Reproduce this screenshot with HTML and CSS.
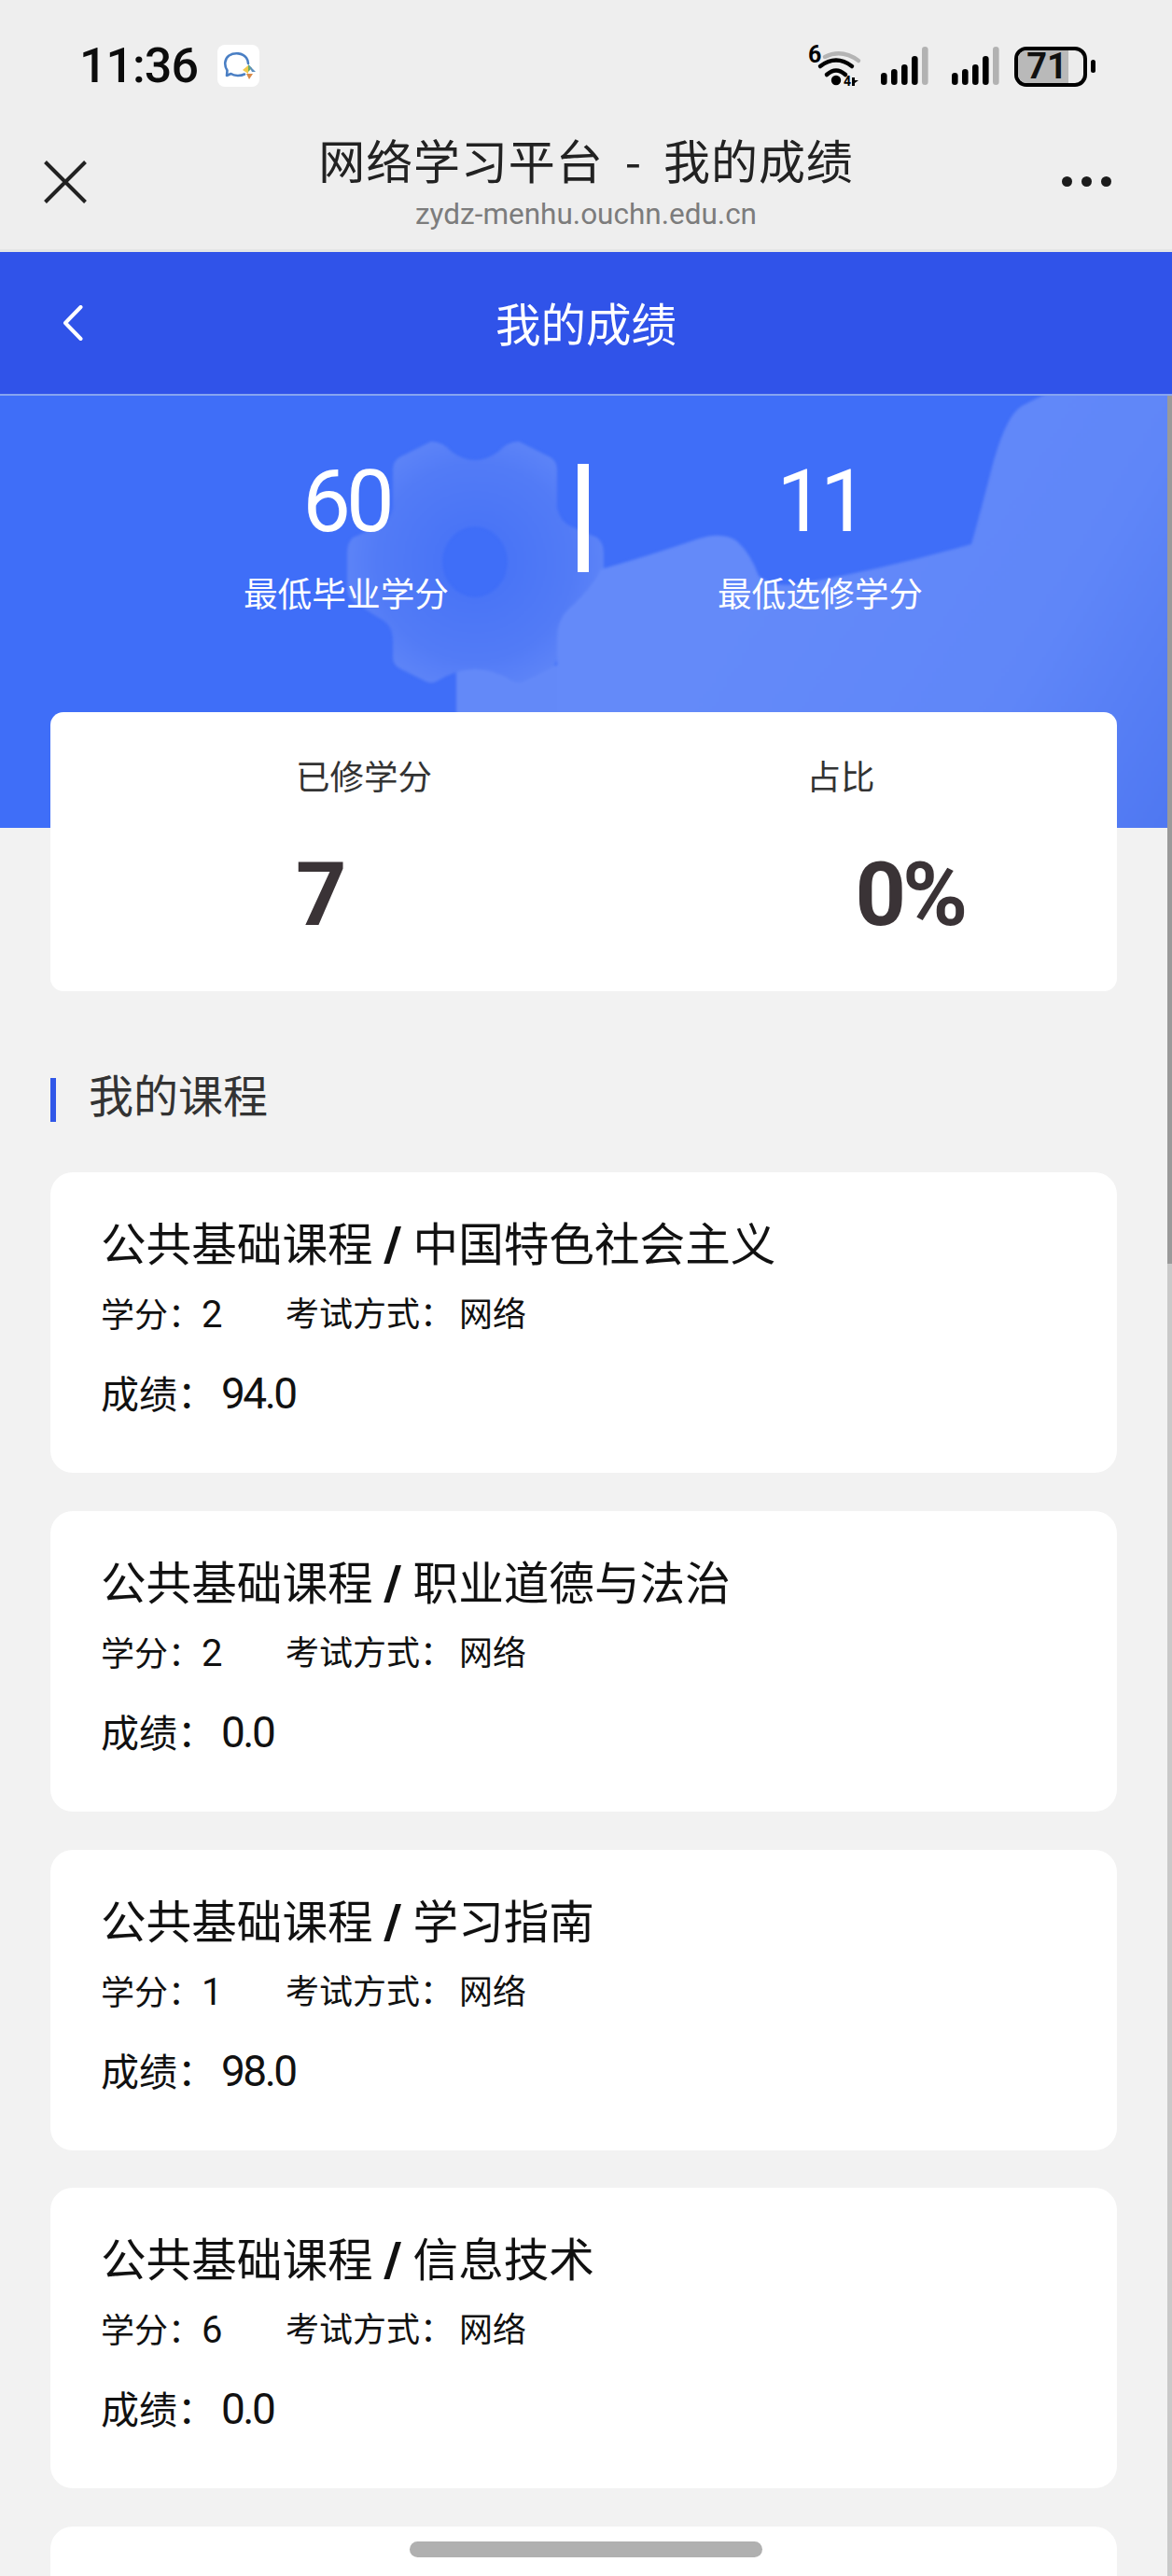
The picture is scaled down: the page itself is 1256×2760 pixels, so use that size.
FILE: index.html
```html
<!DOCTYPE html>
<html lang="zh-CN">
<head>
<meta charset="utf-8">
<title>我的成绩</title>
<link rel="stylesheet" href="styles.css">
</head>
<body>
<div class="screen">
  <header class="chrome">
    <div class="status">
      <div class="status-left">
        <span class="time">11:36</span>
        <svg class="app-icon" viewBox="0 0 45 45" aria-hidden="true">
          <rect width="45" height="45" rx="8" fill="#fff"/>
          <path d="M29 31.5 C25 33.5 18 33.5 14.5 31 L10 33 L10.5 27.5 C7 22 7.5 15 12.5 11.5 C18 8 27 8.5 31 14 C32.5 16 33 18 33 20" fill="none" stroke="#4a7fc4" stroke-width="2.6" stroke-linecap="round" stroke-linejoin="round"/>
          <path d="M33 21 L37 25 L33 29 Z" fill="#6fae62"/>
          <path d="M33 21 L37 25 L41 29 L37 29 Z" fill="#5d8fc0"/>
          <path d="M27 27 L33 22 L33 31 Z" fill="#f1c94c"/>
          <path d="M31 31 L38 31 L34 37 Z" fill="#d98a4a"/>
        </svg>
      </div>
      <div class="status-right">
        <svg class="wifi" viewBox="0 0 58 46" aria-hidden="true">
          <text class="wifi-six" x="0" y="19">6</text>
          <path d="M18 13 Q36 4 54 17" fill="none" stroke="#b4b4b4" stroke-width="4.5" stroke-linecap="round"/>
          <path d="M13 23 Q30 10 47 23" fill="none" stroke="#000" stroke-width="4.5" stroke-linecap="round"/>
          <path d="M20 32 Q30 23 40 32" fill="none" stroke="#000" stroke-width="4.5" stroke-linecap="round"/>
          <circle cx="30" cy="38" r="5.2" fill="#000"/>
          <text class="wifi-four" x="38" y="44">4</text>
          <path d="M47 35 L47 44 L50 44 L50 41 L54 38 L50 38 L50 35 Z" fill="#000"/>
        </svg>
        <svg class="signal" viewBox="0 0 51 41" aria-hidden="true">
          <rect x="0" y="28" width="6.6" height="13" rx="3.3"/>
          <rect x="11" y="24" width="6.6" height="17" rx="3.3"/>
          <rect x="22" y="19" width="6.6" height="22" rx="3.3"/>
          <rect x="33" y="10" width="6.6" height="31" rx="3.3"/>
          <rect class="bar-off" x="44" y="0" width="6.6" height="41" rx="3.3"/>
        </svg>
        <svg class="signal signal-b" viewBox="0 0 51 41" aria-hidden="true">
          <rect x="0" y="28" width="6.6" height="13" rx="3.3"/>
          <rect x="11" y="24" width="6.6" height="17" rx="3.3"/>
          <rect x="22" y="19" width="6.6" height="22" rx="3.3"/>
          <rect x="33" y="10" width="6.6" height="31" rx="3.3"/>
          <rect class="bar-off" x="44" y="0" width="6.6" height="41" rx="3.3"/>
        </svg>
        <div class="battery">
          <div class="battery-body"><div class="battery-fill"></div><span class="battery-num">71</span></div>
          <div class="battery-nub"></div>
        </div>
      </div>
    </div>
    <div class="browser-bar">
      <svg class="close" viewBox="0 0 46 46" aria-hidden="true">
        <path d="M1.5 1.5 L44.5 44.5 M44.5 1.5 L1.5 44.5" stroke="#222" stroke-width="4" fill="none"/>
      </svg>
      <div class="browser-title">
        <div class="page-title">网络学习平台 - 我的成绩</div>
        <div class="page-url">zydz-menhu.ouchn.edu.cn</div>
      </div>
      <div class="more"><i></i><i></i><i></i></div>
    </div>
  </header>

  <nav class="navbar">
    <svg class="back" viewBox="0 0 22 38" aria-hidden="true">
      <path d="M19.5 2 L3 19 L19.5 36" fill="none" stroke="#fff" stroke-width="4" stroke-linecap="round" stroke-linejoin="round"/>
    </svg>
    <h1 class="nav-title">我的成绩</h1>
  </nav>

  <section class="hero">
    <svg class="hero-art" viewBox="0 0 1256 463" aria-hidden="true">
      <defs>
        <radialGradient id="gearFill" gradientUnits="userSpaceOnUse" cx="509" cy="178" r="140">
          <stop offset="0.3" stop-color="#4a75f6"/>
          <stop offset="0.75" stop-color="#527bf6"/>
          <stop offset="1" stop-color="#5d84f7"/>
        </radialGradient>
        <linearGradient id="hillFill" gradientUnits="userSpaceOnUse" x1="780" y1="180" x2="1256" y2="463">
          <stop offset="0" stop-color="#648af9"/>
          <stop offset="0.6" stop-color="#5f86f8"/>
          <stop offset="1" stop-color="#4e77f1"/>
        </linearGradient>
      </defs>
      <path d="M489 470 L489 289 L620 289 L620 470 Z" fill="#6389f8"/>
      <path fill="url(#gearFill)" fill-rule="evenodd" d="M462 49 Q474 49 484 60 Q509 78 534 60 Q544 49 556 49 L590 66 Q597 70 597 80 L597 120 Q600 135 612 140 L640 152 Q647 158 647 168 L647 205 Q647 215 640 220 L612 238 Q597 245 597 262 L597 280 Q597 288 590 292 L562 306 Q556 309 550 306 Q509 280 468 306 Q462 309 456 306 L428 292 Q421 288 421 280 L421 262 Q421 245 406 238 L378 220 Q372 215 372 205 L372 168 Q372 158 378 152 L406 140 Q418 135 421 120 L421 80 Q421 70 428 66 L462 49 Z M474 178 a35 38 0 1 0 70 0 a35 38 0 1 0 -70 0 Z"/>
      <path fill="url(#hillFill)" d="M597 470 L597 260 Q597 240 610 228 Q635 205 644 186 Q700 170 749 153 Q775 145 790 156 Q805 170 813 193 Q830 207 860 201 Q950 185 1041 159 Q1052 120 1064 73 Q1080 15 1099 9 Q1110 3 1130 -6 L1262 -6 L1262 470 Z"/>
    </svg>
    <div class="stats">
      <div class="stat">
        <div class="stat-num">60</div>
        <div class="stat-label">最低毕业学分</div>
      </div>
      <div class="stat-divider"></div>
      <div class="stat">
        <div class="stat-num">11</div>
        <div class="stat-label">最低选修学分</div>
      </div>
    </div>
  </section>

  <main class="content">
    <section class="summary">
      <div class="summary-col summary-done">
        <div class="summary-label">已修学分</div>
        <div class="summary-num">7</div>
      </div>
      <div class="summary-col summary-ratio">
        <div class="summary-label">占比</div>
        <div class="summary-num">0%</div>
      </div>
    </section>

    <h2 class="section-title"><span class="section-bar"></span>我的课程</h2>

    <div class="course-list">
      <article class="course">
        <div class="course-title">公共基础课程<span class="slash">/</span>中国特色社会主义</div>
        <div class="course-meta"><span class="meta-credit">学分：<b>2</b></span><span>考试方式：<em>网络</em></span></div>
        <div class="course-score">成绩：<b>94.0</b></div>
      </article>
      <article class="course">
        <div class="course-title">公共基础课程<span class="slash">/</span>职业道德与法治</div>
        <div class="course-meta"><span class="meta-credit">学分：<b>2</b></span><span>考试方式：<em>网络</em></span></div>
        <div class="course-score">成绩：<b>0.0</b></div>
      </article>
      <article class="course">
        <div class="course-title">公共基础课程<span class="slash">/</span>学习指南</div>
        <div class="course-meta"><span class="meta-credit">学分：<b>1</b></span><span>考试方式：<em>网络</em></span></div>
        <div class="course-score">成绩：<b>98.0</b></div>
      </article>
      <article class="course">
        <div class="course-title">公共基础课程<span class="slash">/</span>信息技术</div>
        <div class="course-meta"><span class="meta-credit">学分：<b>6</b></span><span>考试方式：<em>网络</em></span></div>
        <div class="course-score">成绩：<b>0.0</b></div>
      </article>
      <article class="course"></article>
    </div>
  </main>

  <div class="scrollbar"><div class="scrollbar-thumb"></div></div>
  <div class="home-indicator"></div>
</div>
</body>
</html>
```
FILE: styles.css
```css
* { box-sizing: border-box; }
html, body { margin: 0; padding: 0; }
body {
  background: #f2f2f2;
  font-family: Roboto, "Noto Sans CJK SC", sans-serif;
  color: #111;
}
.screen {
  position: relative;
  width: 1256px;
  height: 2760px;
  overflow: hidden;
  background: #f2f2f2;
}

/* system + browser chrome */
.chrome {
  height: 270px;
  padding-top: 48px;
  background: #eeeeee;
  border-bottom: 3px solid #e4e6e6;
}
.status {
  display: flex;
  justify-content: space-between;
  align-items: center;
  height: 45px;
  padding: 0 82px 0 85px;
}
.status-left { display: flex; align-items: center; gap: 21px; }
.time {
  font-size: 52px;
  line-height: 45px;
  font-weight: 500;
  letter-spacing: -1px;
  color: #0c0c0c;
}
.app-icon { width: 45px; height: 45px; display: block; }
.status-right { display: flex; align-items: flex-end; }
.wifi { width: 58px; height: 46px; display: block; overflow: visible; }
.wifi-six { font: 700 25px Roboto, sans-serif; fill: #000; }
.wifi-four { font: 700 14px Roboto, sans-serif; fill: #000; }
.signal { width: 51px; height: 41px; display: block; margin-left: 20px; margin-bottom: 3px; fill: #000; }
.signal-b { margin-left: 25px; }
.bar-off { fill: #b2b2b2; }
.battery { display: flex; align-items: center; gap: 4px; margin-left: 16px; margin-bottom: 1px; }
.battery-body {
  position: relative;
  width: 78px;
  height: 43px;
  border: 4px solid #000;
  border-radius: 13px;
  background: #ececec;
  overflow: hidden;
}
.battery-fill { width: 77%; height: 100%; background: #b9b9b9; }
.battery-num {
  position: absolute;
  inset: 0 8px 0 0;
  text-align: center;
  font-size: 38px;
  line-height: 35px;
  font-weight: 700;
  color: #111;
}
.battery-nub { width: 5px; height: 14px; border-radius: 3px; background: #000; }

.browser-bar {
  display: grid;
  grid-template-columns: 46px 1fr 53px;
  align-items: center;
  padding: 0 65px 0 47px;
  margin-top: 46px;
  height: 109px;
}
.close { width: 46px; height: 46px; display: block; margin-top: 3px; }
.browser-title { text-align: center; padding-left: 25px; }
.page-title {
  font-family: "Noto Sans CJK SC", sans-serif;
  font-size: 50px;
  line-height: 62px;
  letter-spacing: 0.9px;
  word-spacing: 11px;
  color: #222;
}
.page-url {
  margin-top: 11px;
  font-size: 31.5px;
  line-height: 36px;
  color: #7c7c7c;
}
.more { display: flex; justify-content: space-between; margin-top: 1px; }
.more i { width: 11px; height: 11px; border-radius: 50%; background: #1c1c1c; }

/* app navbar */
.navbar {
  position: relative;
  display: flex;
  align-items: center;
  justify-content: center;
  height: 154px;
  background: #3053e9;
  border-bottom: 2px solid #86a4f0;
}
.back { position: absolute; left: 67px; top: 57px; width: 22px; height: 38px; }
.nav-title {
  margin: -3px 0 0;
  font-family: "Noto Sans CJK SC", sans-serif;
  font-size: 48.5px;
  line-height: 60px;
  font-weight: 400;
  color: #fff;
}

/* hero */
.hero {
  position: relative;
  height: 463px;
  overflow: hidden;
  background: #3f6ef8;
  padding: 69px 0 0 123px;
}
.hero-art { position: absolute; left: 0; top: 0; width: 1256px; height: 463px; display: block; filter: blur(1.5px); overflow: visible; }
.stats {
  position: relative;
  display: grid;
  grid-template-columns: 496px 12px 496px;
}
.stat { text-align: center; color: #fff; }
.stat-num {
  font-size: 92px;
  line-height: 90px;
  font-weight: 400;
  letter-spacing: -5px;
}
.stat-label {
  margin-top: 26px;
  font-family: "Noto Sans CJK SC", sans-serif;
  font-size: 36.7px;
  line-height: 50px;
}
.stat-divider { width: 12px; height: 116px; margin-top: 4px; background: #fff; }

/* content */
.content { padding: 0 59px 0 54px; margin-top: -124px; position: relative; }
.summary {
  height: 299px;
  position: relative;
  display: flex;
  background: #fff;
  border-radius: 14px;
  padding-top: 43px;
}
.summary-col { width: 50%; }
.summary-done { padding-left: 263px; }
.summary-ratio { padding-left: 239px; }
.summary-label {
  font-family: "Noto Sans CJK SC", sans-serif;
  font-size: 36.5px;
  line-height: 50px;
  color: #333;
}
.summary-num {
  margin-top: 53px;
  font-size: 95px;
  line-height: 100px;
  font-weight: 700;
  color: #3a3336;
}
.summary-ratio .summary-num { margin-left: 52px; letter-spacing: -4px; }

.section-title {
  display: flex;
  margin: 85px 0 54px;
  font-family: "Noto Sans CJK SC", sans-serif;
  font-size: 48px;
  line-height: 48px;
  font-weight: 400;
  color: #333;
}
.section-bar {
  width: 6px;
  height: 47px;
  margin: 8px 35px 0 0;
  background: #3057e8;
}

.course-list { display: flex; flex-direction: column; gap: 40.75px; }
.course {
  height: 322px;
  flex: none;
  background: #fff;
  border-radius: 24px;
  padding: 44px 54px 0;
}
.course-title {
  font-family: "Noto Sans CJK SC", sans-serif;
  font-size: 48.6px;
  line-height: 60px;
  color: #111;
}
.slash {
  display: inline-block;
  width: 43px;
  text-align: center;
  font-family: Roboto, sans-serif;
  font-size: 52px;
  line-height: 50px;
  font-weight: 900;
}
.course-meta {
  display: flex;
  margin-top: 24px;
  font-size: 36px;
  line-height: 50px;
  color: #111;
}
.course-meta em { font-style: normal; margin-left: 6px; }
.meta-credit { width: 198px; }
.course-meta b { font-weight: 400; font-size: 40px; }
.course-score {
  margin-top: 30px;
  font-size: 41px;
  line-height: 56px;
  color: #111;
}
.course-score b {
  font-weight: 400;
  font-size: 46px;
  letter-spacing: -2.5px;
  margin-left: 6px;
}

/* overlays */
.scrollbar {
  position: absolute;
  right: 0;
  top: 424px;
  bottom: 0;
  width: 5px;
  background: #c9c9c9;
}
.scrollbar-thumb { height: 930px; background: #9a9a9a; }
.home-indicator {
  position: absolute;
  left: 439px;
  top: 2723px;
  width: 378px;
  height: 17px;
  border-radius: 9px;
  background: #b0b0b0;
}
```
